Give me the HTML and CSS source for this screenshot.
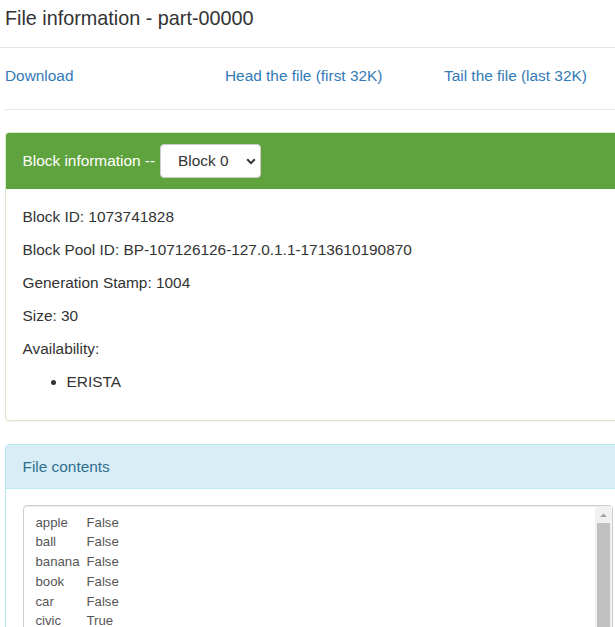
FILE: index.html
```html
<!DOCTYPE html>
<html lang="en">
<head>
<meta charset="utf-8">
<title>File information - part-00000</title>
<link rel="stylesheet" href="styles.css">
</head>
<body>
<div class="modal-header">
  <h4 class="modal-title">File information - part-00000</h4>
</div>
<div class="content">
  <div class="links">
    <a href="#" class="link">Download</a>
    <a href="#" class="link">Head the file (first 32K)</a>
    <a href="#" class="link">Tail the file (last 32K)</a>
  </div>
  <hr class="sep">
  <div class="panel panel-success">
    <div class="panel-heading">
      <span class="panel-title">Block information --</span>
      <div class="select-wrap">
        <select class="block-select"><option>Block 0</option></select>
        <svg class="chev" width="10" height="7" viewBox="0 0 10 7" aria-hidden="true"><path d="M1.2 1.3 L5 5.1 L8.8 1.3" fill="none" stroke="#333" stroke-width="2"/></svg>
      </div>
    </div>
    <div class="panel-body block-body">
      <p class="info">Block ID: 1073741828</p>
      <p class="info">Block Pool ID: BP-107126126-127.0.1.1-1713610190870</p>
      <p class="info">Generation Stamp: 1004</p>
      <p class="info">Size: 30</p>
      <p class="info">Availability:</p>
      <ul class="avail"><li>ERISTA</li></ul>
    </div>
  </div>
  <div class="panel panel-info">
    <div class="panel-heading">
      <span class="panel-title">File contents</span>
    </div>
    <div class="panel-body">
      <div class="text-wrap">
        <textarea class="file-text" readonly>apple	False
ball	False
banana	False
book	False
car	False
civic	True
deed	True
dog	False
house	False
kayak	True
level	True
madam	True
moon	False
noon	True
pen	False
racecar	True
radar	True
refer	True
rotor	True
sagas	True
stats	True
table	False
tenet	True
tree	False
wow	True
</textarea>
        <div class="fake-scrollbar" aria-hidden="true">
          <div class="sb-button">
            <svg width="17" height="17" viewBox="0 0 17 17"><path d="M5 11 L12 11 L8.5 7.5 Z" fill="#a3a3a3"/></svg>
          </div>
          <div class="sb-thumb"></div>
        </div>
      </div>
    </div>
  </div>
</div>
</body>
</html>
```
FILE: styles.css
```css
html {
  overflow: hidden;
}
body {
  margin: 0;
  font-family: "Liberation Sans", Arial, sans-serif;
  font-size: 15.4px;
  line-height: 22px;
  color: #333;
  background: #fff;
}
.modal-header {
  padding: 7px 5px 18px;
  border-bottom: 1px solid #e5e5e5;
}
.modal-title {
  margin: 0;
  font-size: 19.8px;
  line-height: 22px;
  font-weight: normal;
  color: #333;
}
.content {
  width: 642px;
  margin-left: 5px;
  padding-top: 16.5px;
}
.links {
  display: grid;
  grid-template-columns: 220px 219px auto;
  line-height: 22px;
}
.link {
  color: #337ab7;
  text-decoration: none;
}
.sep {
  margin: 22px 0;
  border: 0;
  border-top: 1px solid #e8e8e8;
  height: 0;
}
.panel {
  border: 1px solid #ddd;
  border-radius: 4px;
  margin-bottom: 23px;
  box-shadow: 0 1px 1px rgba(0,0,0,.05);
}
.panel-heading {
  padding: 11px 16.5px;
  border-top-left-radius: 3px;
  border-top-right-radius: 3px;
  display: flex;
  align-items: center;
}
.panel-success {
  border-color: #d6e9c6;
}
.panel-success .panel-heading {
  background: #5fa33e;
  color: #fff;
}
.panel-info {
  border-color: #bce8f1;
}
.panel-info .panel-heading {
  background: #d9edf7;
  color: #31708f;
  border-bottom: 1px solid #bce8f1;
  padding: 11px 16.5px 10px;
}
.panel-title {
  font-size: 15.4px;
  line-height: 22px;
}
.panel-success .panel-title {
  margin-right: 5px;
}
.select-wrap {
  position: relative;
  display: flex;
}
.block-select {
  -webkit-appearance: none;
  appearance: none;
  width: 101px;
  height: 34px;
  margin: 0;
  padding: 0 0 0 17px;
  border: 1px solid #ccc;
  border-radius: 4px;
  background: #fff;
  color: #333;
  font-family: "Liberation Sans", Arial, sans-serif;
  font-size: 15.4px;
}
.chev {
  position: absolute;
  left: 86px;
  top: 14px;
  pointer-events: none;
}
.panel-body {
  padding: 16.5px;
}
.block-body {
  padding-top: 17.5px;
  padding-bottom: 15.5px;
}
.info {
  margin: 0 0 11px;
}
.avail {
  margin: 0 0 11px;
  padding-left: 44px;
}
.text-wrap {
  position: relative;
  width: 590px;
}
.file-text {
  display: block;
  box-sizing: border-box;
  width: 590px;
  height: 420px;
  margin: 0;
  padding: 6.5px 28px 5px 12px;
  border: 1px solid #ccc;
  border-radius: 4px;
  box-shadow: inset 0 1px 1px rgba(0,0,0,.075);
  font-family: "Liberation Sans", Arial, sans-serif;
  font-size: 13.2px;
  line-height: 19.8px;
  color: #555;
  tab-size: 51px;
  -moz-tab-size: 51px;
  overflow: hidden;
  resize: none;
  white-space: pre-wrap;
}
.fake-scrollbar {
  position: absolute;
  top: 1px;
  right: 1px;
  bottom: 1px;
  width: 17px;
  background: #f1f1f1;
  display: flex;
  flex-direction: column;
}
.sb-button {
  height: 17px;
  display: flex;
}
.sb-thumb {
  height: 250px;
  margin: 0 2px;
  background: #c1c1c1;
}
```
